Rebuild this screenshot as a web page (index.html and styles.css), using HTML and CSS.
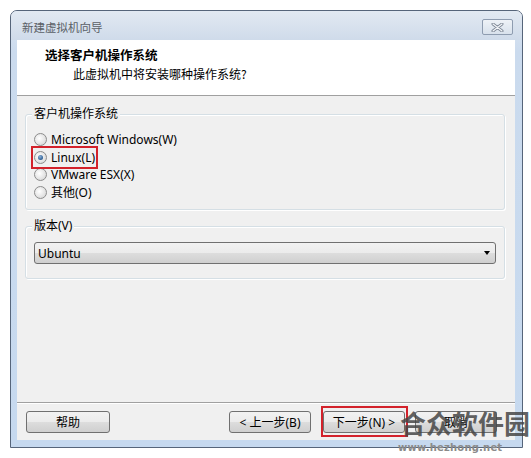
FILE: index.html
```html
<!DOCTYPE html>
<html lang="zh-CN">
<head>
<meta charset="utf-8">
<title>新建虚拟机向导</title>
<link rel="stylesheet" href="styles.css">
</head>
<body>
<div class="window">
  <div class="titlebar">
    <span class="title">新建虚拟机向导</span>
    <div class="close">
      <svg width="13" height="9" viewBox="0 0 13 9"><path d="M2 1 L11 8 M11 1 L2 8" stroke="#7d8796" stroke-width="3" stroke-linecap="round"/><path d="M2 1 L11 8 M11 1 L2 8" stroke="#f4f6f9" stroke-width="1.2" stroke-linecap="round"/></svg>
    </div>
  </div>
  <div class="client">
    <div class="header">
      <div class="h-title">选择客户机操作系统</div>
      <div class="h-sub">此虚拟机中将安装哪种操作系统?</div>
    </div>
    <div class="main">
      <div class="group g1">
        <div class="legend">客户机操作系统</div>
        <div class="radios">
          <div class="radio"><span class="dot"></span><span>Microsoft Windows(W)</span></div>
          <div class="radio checked marked"><span class="dot"></span><span>Linux(L)</span></div>
          <div class="radio"><span class="dot"></span><span>VMware ESX(X)</span></div>
          <div class="radio"><span class="dot"></span><span>其他(O)</span></div>
        </div>
      </div>
      <div class="group g2">
        <div class="legend">版本(V)</div>
        <div class="select"><span>Ubuntu</span><span class="arrow"></span></div>
      </div>
    </div>
    <div class="footer">
      <div class="btn help">帮助</div>
      <div class="spacer"></div>
      <div class="btn back">&lt; 上一步(B)</div>
      <div class="btn next">下一步(N) &gt;</div>
      <div class="btn cancel">取消</div>
    </div>
  </div>
</div>
<div class="watermark">
  <div class="wm-big">合众软件园</div>
  <div class="wm-small">www.hezhong.net</div>
</div>
</body>
</html>
```

FILE: styles.css
```css
html, body {
  margin: 0;
  padding: 0;
  background: #ffffff;
}
body {
  font-family: "Noto Sans", "Noto Sans CJK SC", sans-serif;
  font-size: 12px;
  color: #000;
  position: relative;
  width: 531px;
  height: 458px;
  overflow: hidden;
}
.window {
  margin: 10px 0 0 10px;
  width: 511px;
  height: 436px;
  border: 1px solid #56657a;
  border-radius: 7px 7px 0 0;
  background: linear-gradient(#dfe7f1, #cbdbee 40px, #c6d9ef);
  display: flex;
  flex-direction: column;
}
.titlebar {
  height: 29px;
  display: flex;
  align-items: center;
  padding: 0 9px 0 11px;
  background: linear-gradient(#e2e9f2, #cfdbea);
  border-radius: 6px 6px 0 0;
}
.title {
  flex: 1;
  font-family: "Noto Sans CJK SC", sans-serif;
  font-size: 11.5px;
  color: #5a5f66;
  line-height: 16px;
  margin-top: 2px;
}
.close {
  width: 29px;
  height: 14px;
  border: 1px solid #8e9cb0;
  border-radius: 2px;
  background: linear-gradient(#eef2f7, #d8e1ec);
  display: flex;
  align-items: center;
  justify-content: center;
  margin-top: 3px;
}
.client {
  flex: 1;
  margin: 0 7px 7px 6px;
  background: #f0f0f0;
  display: flex;
  flex-direction: column;
}
.header {
  height: 56px;
  background: #ffffff;
  border-bottom: 1px solid #a0a0a0;
  padding: 7px 0 0 28px;
  box-sizing: border-box;
}
.h-title {
  font-family: "Noto Sans CJK SC", sans-serif;
  font-weight: bold;
  font-size: 12.5px;
  line-height: 16px;
}
.h-sub {
  font-family: "Noto Sans CJK SC", sans-serif;
  font-size: 12px;
  line-height: 16px;
  margin: 3px 0 0 28px;
}
.main {
  flex: 1;
  padding: 18px 10px 0 8px;
  display: flex;
  flex-direction: column;
  gap: 16px;
}
.group {
  border: 1px solid #d5dfe5;
  border-radius: 3px;
  box-shadow: inset 1px 1px 0 #fff, 1px 1px 0 #fff;
  padding: 0 8px;
}
.legend {
  width: max-content;
  margin: -9px 0 0 -2px;
  padding: 0 2px;
  background: #f0f0f0;
  line-height: 16px;
  font-family: "Noto Sans", "Noto Sans CJK SC", sans-serif;
}
.radios {
  padding: 9px 0 8px;
}
.radio {
  display: flex;
  align-items: center;
  gap: 4px;
  height: 17.5px;
  width: max-content;
}
.dot {
  width: 11px;
  height: 11px;
  border: 1px solid #8c8c8c;
  border-radius: 50%;
  background: radial-gradient(circle at 40% 40%, #ffffff, #e3e3e3 60%, #d0d0d0);
  box-sizing: content-box;
  display: flex;
  align-items: center;
  justify-content: center;
}
.checked .dot::after {
  content: "";
  width: 5px;
  height: 5px;
  border-radius: 50%;
  background: radial-gradient(circle at 40% 35%, #8fb3d9, #2d5f94 70%, #1d3e66);
}
.marked {
  outline: 2px solid #d3222b;
  outline-offset: 1px;
}
.g2 {
  padding-bottom: 14px;
}
.select {
  margin-top: 8px;
  height: 20px;
  border: 1px solid #707070;
  border-radius: 3px;
  background: linear-gradient(#f2f2f2, #ebebeb 50%, #dddddd 50%, #cfcfcf);
  display: flex;
  align-items: center;
  justify-content: space-between;
  padding: 0 4px 0 3px;
}
.arrow {
  width: 0;
  height: 0;
  border-left: 3.5px solid transparent;
  border-right: 3.5px solid transparent;
  border-top: 4px solid #000;
  margin-right: 1px;
}
.footer {
  border-top: 1px solid #a0a0a0;
  box-shadow: inset 0 1px 0 #ffffff;
  padding: 8px 18px 7px 9px;
  display: flex;
  align-items: center;
}
.spacer {
  flex: 1;
}
.btn {
  width: 80px;
  height: 20px;
  border: 1px solid #707070;
  border-radius: 3px;
  background: linear-gradient(#f2f2f2, #ebebeb 50%, #dddddd 50%, #cfcfcf);
  display: flex;
  align-items: center;
  justify-content: center;
  font-family: "Noto Sans", "Noto Sans CJK SC", sans-serif;
  font-size: 12px;
  position: relative;
}
.help {
  width: 82px;
}
.next {
  margin-left: 12px;
}
.next::after {
  content: "";
  position: absolute;
  left: -3px;
  top: -6px;
  right: -4px;
  bottom: -5px;
  border: 2px solid #d3222b;
}
.cancel {
  margin-left: 10px;
}
.watermark {
  position: absolute;
  left: 398px;
  top: 405px;
  width: 132px;
  text-align: right;
}
.wm-big {
  font-family: "Noto Sans CJK SC", sans-serif;
  font-size: 26px;
  font-weight: bold;
  line-height: 36px;
  color: rgba(70, 70, 70, 0.85);
  white-space: nowrap;
}
.wm-small {
  font-family: "DejaVu Sans", sans-serif;
  font-size: 10px;
  font-weight: bold;
  letter-spacing: 0.2px;
  color: #8a8a8a;
  line-height: 10px;
  margin: 2px 33px 0 0;
  white-space: nowrap;
}
```
